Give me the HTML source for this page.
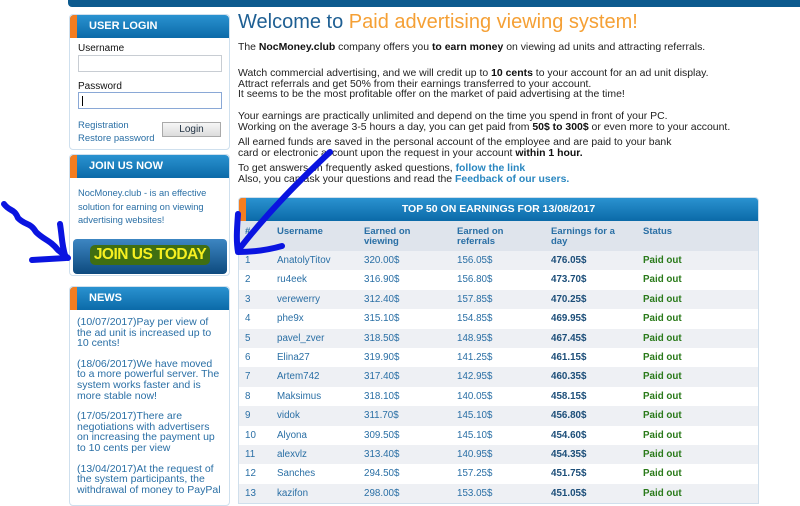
<!DOCTYPE html>
<html><head><meta charset="utf-8"><style>
*{margin:0;padding:0;box-sizing:border-box}
body{width:800px;height:492px;overflow:hidden;background:#fff;font-family:"Liberation Sans",Arial,sans-serif;position:relative;font-size:11px;color:#222}
.top{position:absolute;left:68px;top:0;width:732px;height:7px;background:#0c5a8e;border-radius:0 0 0 4px}
.box{position:absolute;left:69px;width:161px;border:1px solid #cfe0ee;border-radius:4px;background:#fff}
.hd{height:23px;background:linear-gradient(#2a92d0,#0b6aa8);border-radius:4px 4px 0 0;position:relative;color:#fff;font-weight:bold;font-size:11px;line-height:23px;padding-left:19px}
.hd:before{content:"";position:absolute;left:0;top:0;width:7px;height:23px;background:#f47d20;border-radius:4px 0 0 0}
.lbl{position:absolute;font-size:10px;color:#111}
.inp{position:absolute;left:8px;width:144px;height:17px;border:1px solid #c8cdd3;background:#fff}
a{color:#2a6fa5}
h1{position:absolute;left:238px;top:11px;font-weight:normal;font-size:20px;color:#1e5f93;white-space:nowrap}
h1 span{color:#f5a035}
.p{position:absolute;left:238px;font-size:10.45px;line-height:10.7px;color:#222;white-space:nowrap}
.p b{color:#111}
.p a{color:#2a87c0;text-decoration:none;font-weight:bold}
.tbl{position:absolute;left:238px;top:197px;width:521px;border:1px solid #d0dfec;border-radius:4px 4px 0 0;overflow:hidden}
.th{height:23px;background:linear-gradient(#2a92d0,#0b6aa8);color:#fff;font-weight:bold;text-align:center;line-height:23px;font-size:10.5px;position:relative}
.th:before{content:"";position:absolute;left:0;top:0;width:7px;height:23px;background:#f47d20}
.ch{height:30px;background:#dfe4ec;position:relative;color:#2a6fa5;font-weight:bold;font-size:9.5px;line-height:10px}
.r{height:19.4px;position:relative;font-size:9.8px;color:#2a6fa5;line-height:19px}
.r:nth-child(odd){background:#eef0f4}
.c{position:absolute;top:0}
.ch .c{top:6px}
.b{font-weight:bold;color:#1c4e79}
.g{font-weight:bold;color:#2a7a1a}
.news{font-size:10.5px;color:#2a6fa5;line-height:10.6px;padding:7px 6px 0 7px}
.news p{margin-bottom:10px}
</style></head><body>
<div class="top"></div>

<div class="box" style="top:14px;height:136px">
 <div class="hd">USER LOGIN</div>
 <div class="lbl" style="left:8px;top:28px">Username</div>
 <div class="inp" style="top:40px"></div>
 <div class="lbl" style="left:8px;top:66px">Password</div>
 <div class="inp" style="top:77px;border-color:#8aa8d6"><div style="position:absolute;left:3px;top:3px;width:1px;height:10px;background:#000"></div></div>
 <div style="position:absolute;left:8px;top:104px;font-size:9.5px;line-height:13px"><a>Registration</a><br><a>Restore password</a></div>
 <div style="position:absolute;left:92px;top:107px;width:59px;height:15px;border:1px solid #aaa;background:linear-gradient(#f6f6f6,#dcdcdc);text-align:center;font-size:10px;line-height:13px;color:#234">Login</div>
</div>

<div class="box" style="top:154px;height:122px">
 <div class="hd">JOIN US NOW</div>
 <div style="position:absolute;left:8px;top:32px;font-size:9.3px;line-height:13.5px;color:#2a6fa5">NocMoney.club - is an effective<br>solution for earning on viewing<br>advertising websites!</div>
 <div style="position:absolute;left:3px;top:84px;width:154px;height:35px;border-radius:4px;background:linear-gradient(#3d86c2,#0d4a7e);text-align:center">
  <span style="display:inline-block;margin-top:6px;background:#3f6e12;color:#f7f020;font-weight:bold;font-size:15.5px;padding:1px 4px;border-radius:5px;letter-spacing:-0.5px">JOIN US TODAY</span></div>
</div>

<div class="box" style="top:286px;height:220px">
 <div class="hd">NEWS</div>
 <div class="news">
  <p>(10/07/2017)Pay per view of the ad unit is increased up to 10 cents!</p>
  <p>(18/06/2017)We have moved to a more powerful server. The system works faster and is more stable now!</p>
  <p>(17/05/2017)There are negotiations with advertisers on increasing the payment up to 10 cents per view</p>
  <p>(13/04/2017)At the request of the system participants, the withdrawal of money to PayPal</p>
 </div>
</div>

<h1>Welcome to <span>Paid advertising viewing system!</span></h1>
<div class="p" style="top:43px">The <b>NocMoney.club</b> company offers you <b>to earn money</b> on viewing ad units and attracting referrals.</div>
<div class="p" style="top:69px">Watch commercial advertising, and we will credit up to <b>10 cents</b> to your account for an ad unit display.<br>Attract referrals and get 50% from their earnings transferred to your account.<br>It seems to be the most profitable offer on the market of paid advertising at the time!</div>
<div class="p" style="top:112px">Your earnings are practically unlimited and depend on the time you spend in front of your PC.<br>Working on the average 3-5 hours a day, you can get paid from <b>50$ to 300$</b> or even more to your account.</div>
<div class="p" style="top:138px">All earned funds are saved in the personal account of the employee and are paid to your bank<br>card or electronic account upon the request in your account <b>within 1 hour.</b></div>
<div class="p" style="top:164px">To get answers on frequently asked questions, <a>follow the link</a><br>Also, you can ask your questions and read the <a>Feedback of our users.</a></div>

<div class="tbl">
 <div class="th">TOP 50 ON EARNINGS FOR 13/08/2017</div>
 <div class="ch"><span class="c" style="left:6px">#</span><span class="c" style="left:38px">Username</span><span class="c" style="left:125px">Earned on<br>viewing</span><span class="c" style="left:218px">Earned on<br>referrals</span><span class="c" style="left:312px">Earnings for a<br>day</span><span class="c" style="left:404px">Status</span></div>
 <div id="rows"></div>
</div>
<script>
var d=[["AnatolyTitov","320.00$","156.05$","476.05$"],["ru4eek","316.90$","156.80$","473.70$"],["verewerry","312.40$","157.85$","470.25$"],["phe9x","315.10$","154.85$","469.95$"],["pavel_zver","318.50$","148.95$","467.45$"],["Elina27","319.90$","141.25$","461.15$"],["Artem742","317.40$","142.95$","460.35$"],["Maksimus","318.10$","140.05$","458.15$"],["vidok","311.70$","145.10$","456.80$"],["Alyona","309.50$","145.10$","454.60$"],["alexvlz","313.40$","140.95$","454.35$"],["Sanches","294.50$","157.25$","451.75$"],["kazifon","298.00$","153.05$","451.05$"]];
var h="";d.forEach(function(r,i){h+='<div class="r"><span class="c" style="left:6px">'+(i+1)+'</span><span class="c" style="left:38px">'+r[0]+'</span><span class="c" style="left:125px">'+r[1]+'</span><span class="c" style="left:218px">'+r[2]+'</span><span class="c b" style="left:312px">'+r[3]+'</span><span class="c g" style="left:404px">Paid out</span></div>';});
document.getElementById("rows").innerHTML=h;
</script>

<svg width="800" height="492" style="position:absolute;left:0;top:0" fill="none" stroke="#0a14e0" stroke-width="6" stroke-linecap="round" stroke-linejoin="round">
 <path d="M4 204 C10 212 14 208 18 218 C26 226 30 222 36 232 C44 240 50 240 58 250 L68 258"/>
 <path d="M60 224 C62 236 62 248 66 258 L32 260"/>
 <path d="M330 152 C300 180 270 210 240 248"/>
 <path d="M238 214 C237 228 236 240 238 252 C255 252 268 250 282 246"/>
</svg>
</body></html>
